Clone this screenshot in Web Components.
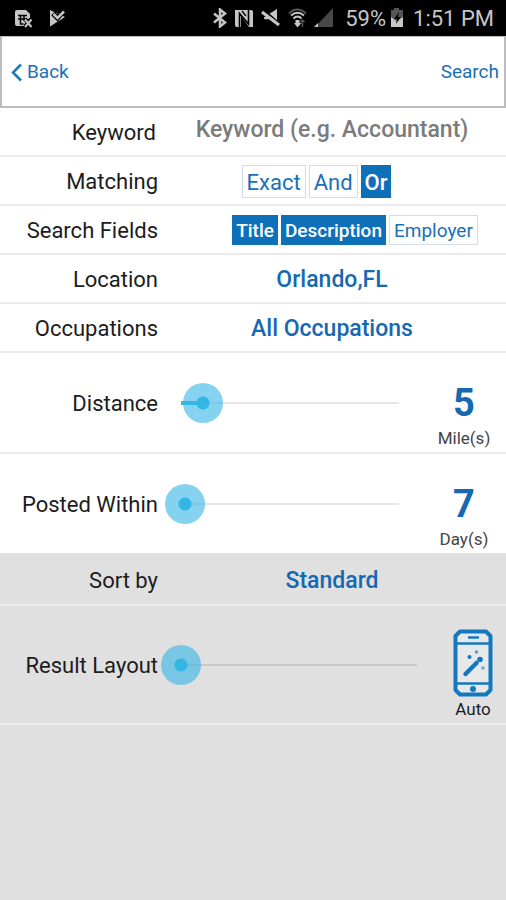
<!DOCTYPE html>
<html lang="en">
<head>
<meta charset="utf-8">
<meta name="viewport" content="width=device-width, initial-scale=1">
<title>Job Search</title>
<style>
  html, body { margin: 0; min-height: 100%; background: #e0e0e0; }
  body { font-family: Roboto, "Liberation Sans", sans-serif; color: #1c1c1c; }
</style>
</head>
<body>
<job-search-app></job-search-app>

<script>
const define = (name, html, setup) => {
  const template = document.createElement('template');
  template.innerHTML = html;
  customElements.define(name, class extends HTMLElement {
    constructor() {
      super();
      this.attachShadow({ mode: 'open' }).append(template.content.cloneNode(true));
    }
    connectedCallback() { if (setup) setup(this, this.shadowRoot); }
  });
};

const rowCss = `
  :host {
    display: grid; grid-template-columns: 158px 1fr; align-items: center;
    box-sizing: border-box; min-height: 49px;
    background: var(--row-bg, #fff); border-bottom: 2px solid var(--row-line, #ebebeb);
  }
  .label { text-align: right; font-size: 22px; line-height: 28px; padding-top: 3px; white-space: nowrap; }
  button { font-family: inherit; margin: 0; cursor: pointer; }
`;

define('status-bar', `
  <style>
    :host { display: flex; align-items: center; justify-content: space-between; height: 36px;
      padding: 0 12px 0 14px; background: #000; color: #c6c6c6; }
    .side { display: flex; align-items: center; }
    .left { gap: 16px; }
    .icons { gap: 7px; }
    svg { display: block; fill: #c6c6c6; }
    span { font-size: 22px; line-height: 36px; white-space: nowrap; padding-top: 2px; }
    .battery { margin: 0 9px 0 4px; }
    .percent { margin-left: 11px; }
  </style>
  <div class="side left">
    <svg width="19" height="19" viewBox="0 0 19 19"><path d="M3 1h9l4 4v6h-2l-2 6H3q-2 0-2-2V3q0-2 2-2z"/><path d="M4 6.500h9M4 10h8M6.500 7v8h3M10 7v5" fill="none" stroke="#000" stroke-width="1.500"/><path d="M11 10l6 7.500M17 10l-6 7.500" stroke="#000" stroke-width="4"/><path d="M11 10.500l6.500 7.500M17.500 10.500l-6.500 7.500" stroke="#c6c6c6" stroke-width="2"/></svg>
    <svg width="17" height="18" viewBox="0 0 17 18"><path d="M1 1l15 7L1 17.500z"/><path d="M4 4.500l4.500 4.500 7-8" fill="none" stroke="#000" stroke-width="5"/><path d="M4.500 5l4 4 6.500-6.500" fill="none" stroke="#c6c6c6" stroke-width="2.500"/></svg>
  </div>
  <div class="side">
    <div class="side icons">
      <svg width="14" height="20" viewBox="0 0 14 20"><path d="M1 5.500l11 9-5 4V1.500l5 4-11 9" fill="none" stroke="#c6c6c6" stroke-width="2.500"/></svg>
      <svg width="20" height="19" viewBox="0 0 20 19"><path d="M3 1h14q2 0 2 2v15h-4L7 7v11H3q-2 0-2-2V1z"/><path d="M5.500 18V4.500L14.500 15V1" fill="none" stroke="#000" stroke-width="1.600"/><path d="M8 2l4 5M8 12l4 5" stroke="#000" stroke-width="1.300"/></svg>
      <svg width="20" height="20" viewBox="0 0 20 20"><path d="M8 6l8-5v13L8 11H3V6z"/><path d="M0 2l18 16" stroke="#000" stroke-width="6"/><path d="M1 4l17 13" stroke="#c6c6c6" stroke-width="3"/><path d="M4 10l5 0 5 4" fill="none" stroke="#c6c6c6" stroke-width="2.500"/></svg>
      <svg width="19" height="20" viewBox="0 0 19 20"><g fill="none"><path d="M1 5.500q8-8 17 0" stroke="#555" stroke-width="2"/><path d="M3 7.500q6.500-5.500 13 0M5.500 10.500q4-4 8 0" stroke="#c6c6c6" stroke-width="2"/></g><path d="M7.500 12h4v3h2L9.500 19.500 6 15h1.500z"/><path d="M14.500 19v-7m-2 2 2-2 2 2" fill="none" stroke="#555" stroke-width="1.500"/></svg>
      <svg width="20" height="20" viewBox="0 0 20 20"><path d="M19 0v19H1z" style="fill:#484848"/><path d="M4 15v4H0z"/></svg>
    </div>
    <span class="percent">59%</span>
    <svg class="battery" width="14" height="20" viewBox="0 0 14 20"><path d="M4 0h5v2h4v17H1V2h3z" style="fill:#565656"/><path d="M1 9l5 4 7-4v10H1z"/><path d="M9 4l-5 7h3l-1 5 5-7H8z" style="fill:#000"/></svg>
    <span>1:51 PM</span>
  </div>
`);

define('nav-bar', `
  <style>
    :host { display: flex; align-items: center; justify-content: space-between; box-sizing: border-box;
      height: 72px; padding: 1px 5px 0 9px; background: #fff; border: 2px solid #bdbdbd; border-top-width: 1px; }
    a { display: flex; align-items: center; gap: 4px; color: #1b6fb8; text-decoration: none;
      font-size: 20px; line-height: 28px; }
    a { font-size: 19px; }
    svg { margin-right: 1px; }
  </style>
  <a href="#back"><svg width="11" height="19" viewBox="0 0 11 19" fill="none" stroke="#1a7abf" stroke-width="2.500"><path d="M10 1.500L2 9.500l8 8"/></svg>Back</a>
  <a href="#search">Search</a>
`);

define('keyword-row', `
  <style>${rowCss}
    .label { padding-right: 2px; }
    input { width: 100%; box-sizing: border-box; margin: 0; border: 0; padding: 0 0 3px; outline: 0; background: none;
      font: 500 23px/28px Roboto, "Liberation Sans", sans-serif; text-align: center; color: #1668b0; }
    input::placeholder { color: #7b7b7b; opacity: 1; }
  </style>
  <label class="label" for="keyword">Keyword</label>
  <input id="keyword" type="text" placeholder="Keyword (e.g. Accountant)">
`);

define('choice-row', `
  <style>${rowCss}
    .group { display: flex; justify-content: center; gap: 3px; padding: 1px var(--group-right, 0) 0 var(--group-left, 0); }
  </style>
  <span class="label"></span>
  <div class="group" role="group"><slot></slot></div>
`, (host, root) => {
  root.querySelector('.label').textContent = host.getAttribute('label');
  root.querySelector('.group').setAttribute('aria-label', host.getAttribute('label'));
});

define('toggle-chip', `
  <style>
    :host { display: block; font-size: 22px; line-height: 29px; }
    :host([small]) { font-size: 19px; line-height: 26px; }
    button { display: block; margin: 0; padding: 2px 4px 0; font: inherit; color: #1b6fb8; cursor: pointer;
      background: #fff; border: 1px solid #d3dcec; }
    button[aria-pressed="true"] { color: #fff; background: #0f70ba; border-color: #0f70ba; font-weight: 500; padding: 2px 3px 0; }
  </style>
  <button type="button"><slot></slot></button>
`, (host, root) => {
  const button = root.querySelector('button');
  button.setAttribute('aria-pressed', host.hasAttribute('on'));
  button.onclick = () => button.setAttribute('aria-pressed', button.getAttribute('aria-pressed') !== 'true');
});

define('value-row', `
  <style>${rowCss}
    button { border: 0; padding: 3px 0 0; background: none; color: #1668b0; font-size: 23px; line-height: 28px; font-weight: 500; }
  </style>
  <span class="label" id="label"></span>
  <button type="button" aria-describedby="label"><slot></slot></button>
`, (host, root) => {
  root.querySelector('.label').textContent = host.getAttribute('label');
});

define('slider-row', `
  <style>${rowCss}
    :host { grid-template-columns: 158px 1fr var(--side, 84px); column-gap: 3px; align-items: stretch; min-height: 101px; }
    .label { align-self: center; }
    input {
      --fill: 0;
      align-self: center; width: 100%; height: 40px; margin: 0; padding: 0; appearance: none; cursor: pointer;
      background:
        linear-gradient(#33b5e5, #33b5e5) 20px 50% / calc((100% - 40px) * var(--fill) / 100) 4px no-repeat,
        linear-gradient(var(--track, #e6e6e6), var(--track, #e6e6e6)) 50% 50% / calc(100% - 40px) 2px no-repeat;
    }
    input::-webkit-slider-thumb { appearance: none; width: 40px; height: 40px; border-radius: 50%;
      background: radial-gradient(circle, #33b5e5 6px, rgba(51, 181, 229, .6) 7px); }
    .side { display: flex; flex-direction: column; justify-content: flex-end; align-items: center; padding-bottom: 4px; }
  </style>
  <label class="label" for="range"></label>
  <input id="range" type="range" min="0" max="100">
  <div class="side"><slot></slot></div>
`, (host, root) => {
  root.querySelector('.label').textContent = host.getAttribute('label');
  const input = root.querySelector('input');
  const paint = () => input.style.setProperty('--fill', input.value);
  input.value = host.getAttribute('value');
  input.oninput = paint;
  paint();
});

define('big-number', `
  <style>
    :host { display: flex; flex-direction: column; align-items: center; gap: 3px; }
    .number { font-size: 38px; line-height: 44px; font-weight: 700; color: #1668b0; }
    .unit { font-size: 17px; line-height: 20px; color: #444; }
  </style>
  <span class="number"><slot></slot></span>
  <span class="unit"><slot name="unit"></slot></span>
`);

define('layout-preview', `
  <style>
    :host { display: flex; flex-direction: column; align-items: center; gap: 2px; font-size: 17px; line-height: 20px; }
    svg { display: block; }
  </style>
  <svg width="40" height="68" viewBox="0 0 40 68" fill="none" stroke="#1478be">
    <path d="M7 2.500h26l4.500 4.500v54L33 65.500H7L2.500 61V7z" fill="#e6e8ea" stroke-width="4" stroke-linejoin="round"/>
    <path d="M3 14.500h34M3 54.500h34" stroke-width="2.500"/>
    <path d="M15 8.500h11" stroke-width="2.500"/>
    <path d="M12.500 45L23.500 34" stroke-width="4.500" stroke-linecap="round"/>
    <g fill="#1478be" stroke="none">
      <circle cx="20" cy="60" r="3"/><circle cx="27" cy="30.500" r="2.800"/>
      <circle cx="16.500" cy="28" r="2"/><circle cx="23.500" cy="23" r="1.700" opacity=".7"/><circle cx="30" cy="39" r="1.700" opacity=".6"/>
    </g>
  </svg>
  <slot></slot>
`);

define('job-search-app', `
  <style>
    :host { display: block; }
    .grey { --row-bg: #e0e0e0; --row-line: #ededed; --track: #c9c9c9; }
    .matching { --group-right: 31px; }
    .fields { --group-left: 46px; }
    .posted { --row-line: #e0e0e0; }
    .sort { min-height: 51px; }
    .layout { --side: 66px; min-height: 119px; }
  </style>
  <status-bar></status-bar>
  <nav-bar></nav-bar>
  <main>
    <keyword-row></keyword-row>
    <choice-row label="Matching" class="matching">
      <toggle-chip>Exact</toggle-chip><toggle-chip>And</toggle-chip><toggle-chip on>Or</toggle-chip>
    </choice-row>
    <choice-row label="Search Fields" class="fields">
      <toggle-chip small on>Title</toggle-chip><toggle-chip small on>Description</toggle-chip><toggle-chip small>Employer</toggle-chip>
    </choice-row>
    <value-row label="Location">Orlando,FL</value-row>
    <value-row label="Occupations">All Occupations</value-row>
    <slider-row label="Distance" value="10"><big-number>5<span slot="unit">Mile(s)</span></big-number></slider-row>
    <slider-row class="posted" label="Posted Within" value="2"><big-number>7<span slot="unit">Day(s)</span></big-number></slider-row>
    <value-row class="grey sort" label="Sort by">Standard</value-row>
    <slider-row class="grey layout" label="Result Layout" value="0"><layout-preview>Auto</layout-preview></slider-row>
  </main>
`);
</script>
</body>
</html>
